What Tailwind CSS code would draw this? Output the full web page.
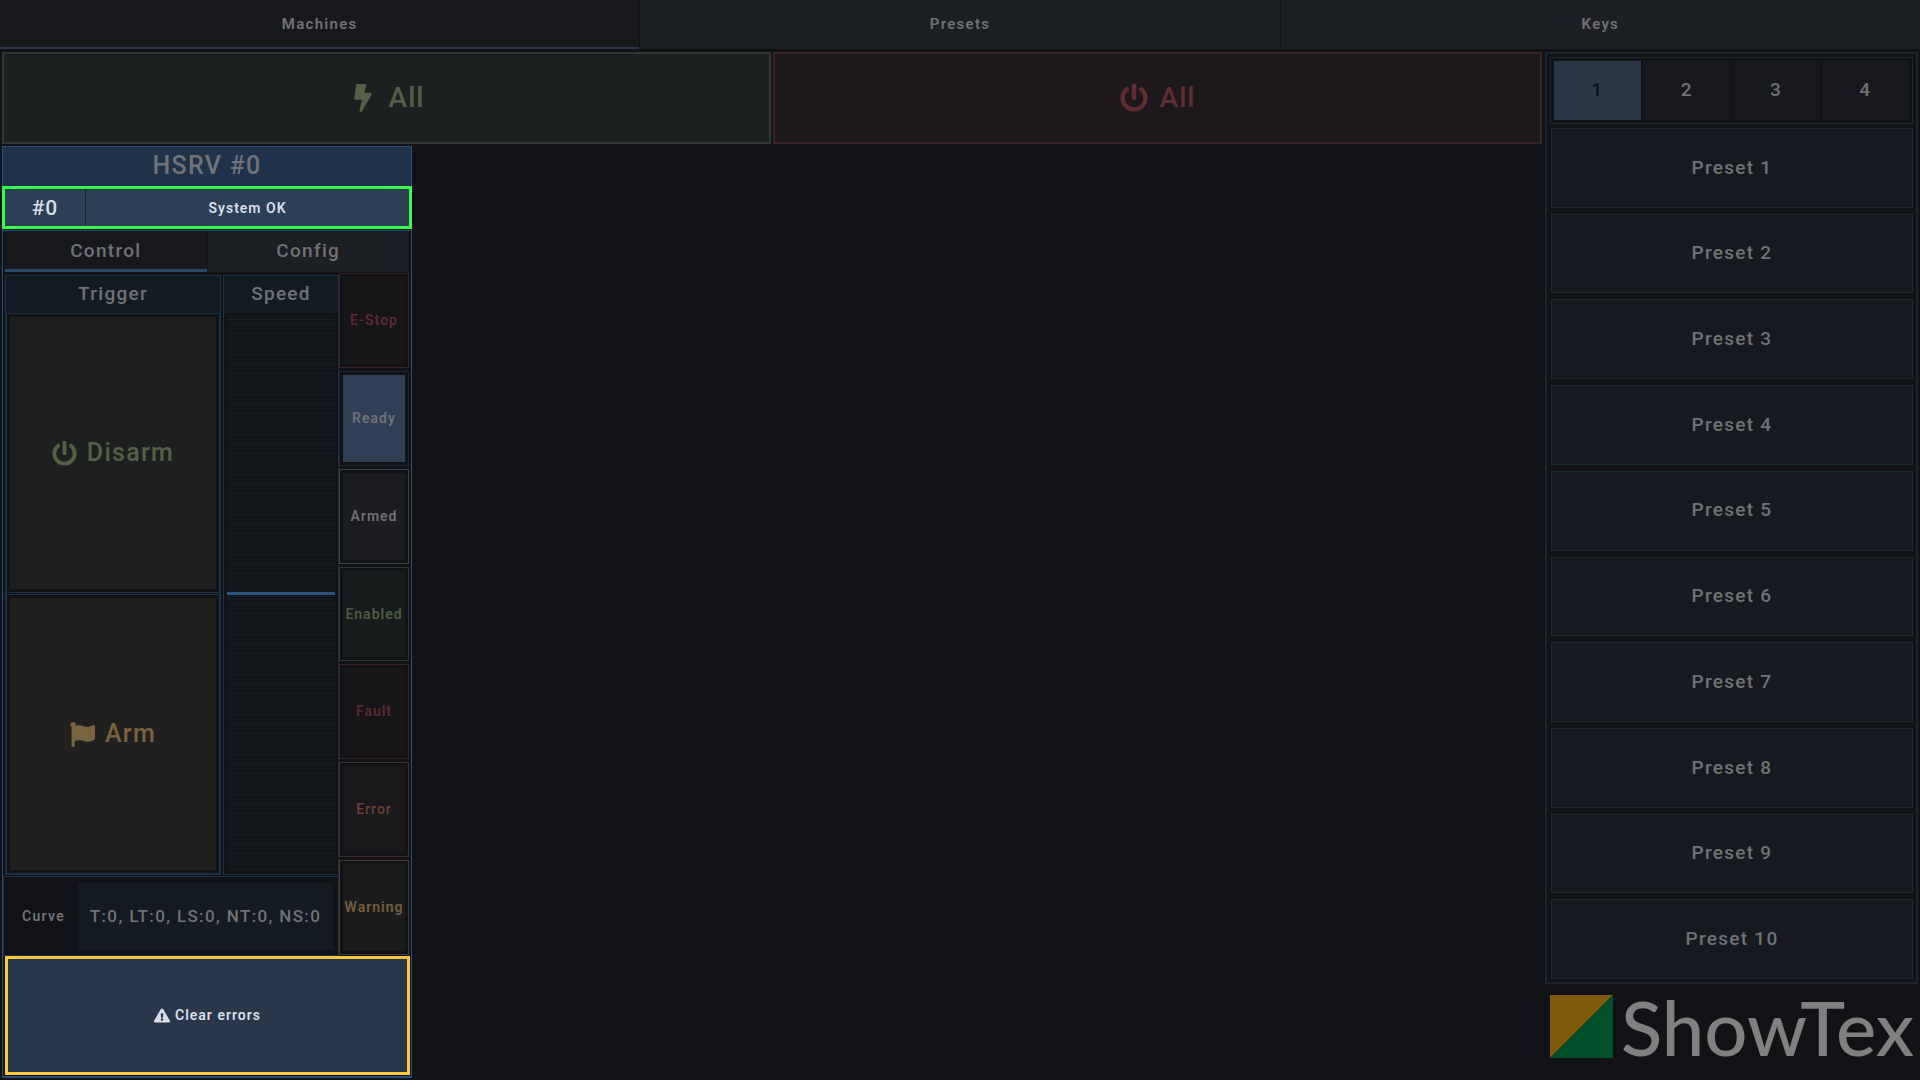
<!DOCTYPE html>
<html lang="en">
<head>
    <meta charset="UTF-8">
    <meta name="viewport" content="width=device-width, initial-scale=1.0">
    <title>ShowTex machine control</title>
    <script src="https://cdn.jsdelivr.net/npm/@tailwindcss/browser@4"></script>
</head>
<body class="bg-[#111216] text-[#707275] font-[Roboto,sans-serif] font-medium tracking-[0.08em]">
    <!-- icons -->
    <svg class="hidden">
        <symbol id="power" viewBox="0 0 512 512">
            <path fill="currentColor" d="M400 54.100c63 45 104 118.600 104 201.900 0 136.800-110.800 247.700-247.500 248C120 504.300 8.200 393 8 256.400 7.900 173.100 48.900 99.300 111.800 54.200c11.700-8.300 28-4.800 35 7.700L162.600 90c5.900 10.500 3.100 23.800-6.600 31-41.500 30.800-68 79.600-68 134.900-.1 92.300 74.500 168.100 168 168.100 91.600 0 168.600-74.200 168-169.100-.3-51.800-24.700-101.800-68.100-134-9.700-7.200-12.400-20.500-6.500-30.900l15.800-28.100c7-12.400 23.200-16.100 34.800-7.800zM296 264V24c0-13.300-10.700-24-24-24h-32c-13.300 0-24 10.700-24 24v240c0 13.300 10.700 24 24 24h32c13.300 0 24-10.700 24-24z"/>
        </symbol>
        <symbol id="bolt" viewBox="0 0 320 512">
            <path fill="currentColor" d="M296 160H180.600l42.600-129.800C227.200 15 215.700 0 200 0H56C44 0 33.800 8.900 32.200 20.800l-32 240C-1.700 275.200 9.500 288 24 288h118.700L96.600 482.500c-3.600 15.200 8 29.500 23.300 29.500 8.400 0 16.400-4.400 20.800-12l176-304c9.300-15.900-2.200-36-20.700-36z"/>
        </symbol>
        <symbol id="flag" viewBox="0 0 512 512">
            <path fill="currentColor" d="M349.565 98.783C295.978 98.783 251.721 64 184.348 64c-24.955 0-47.309 4.384-68.045 12.013a55.947 55.947 0 0 0 3.586-23.562C118.117 24.015 94.806 1.206 66.338.048 34.345-1.254 8 24.296 8 56c0 19.026 9.497 35.825 24 45.945V488c0 13.255 10.745 24 24 24h16c13.255 0 24-10.745 24-24v-94.400c28.311-12.064 63.582-22.122 114.435-22.122 53.588 0 97.844 34.783 165.217 34.783 48.169 0 86.667-16.294 122.505-40.858C506.840 359.452 512 349.571 512 339.045v-243.100c0-23.393-24.269-38.870-45.485-29.016-34.338 15.948-76.454 31.854-116.950 31.854z"/>
        </symbol>
        <symbol id="alert" viewBox="0 0 576 512">
            <path fill="currentColor" d="M569.517 440.013C587.975 472.007 564.806 512 527.940 512H48.054c-36.937 0-59.999-40.055-41.577-71.987L246.423 23.985c18.467-32.009 64.720-31.951 83.154 0l239.940 416.028zM288 354c-25.405 0-46 20.595-46 46s20.595 46 46 46 46-20.595 46-46-20.595-46-46-46zm-43.673-165.346l7.418 136c.347 6.364 5.609 11.346 11.982 11.346h48.546c6.373 0 11.635-4.982 11.982-11.346l7.418-136c.375-6.874-5.098-12.654-11.982-12.654h-63.383c-6.884 0-12.356 5.780-11.981 12.654z"/>
        </symbol>
    </svg>

    <div class="flex flex-col h-screen">
        <nav class="grid grid-cols-3 gap-px h-[49px] shrink-0 text-[15px] font-semibold">
            <button class="bg-[#17181c] border-b-2 border-[#293749] pt-[2px]">Machines</button>
            <button class="bg-[#1b1e22]">Presets</button>
            <button class="bg-[#1b1e22]">Keys</button>
        </nav>

        <div class="flex flex-1 min-h-0 gap-[3px] pt-[3px] pl-[2px] pr-[2px]">
            <main class="flex flex-col flex-1 gap-[2px] min-w-0 pb-[2px]">
                <div class="grid grid-cols-2 gap-[2px] h-[92px] shrink-0 text-[28px] tracking-[1px]">
                    <button class="flex items-center justify-center gap-3 bg-[#1c1f1f] border-2 border-[#30372e] text-[#536046]">
                        <svg class="w-[28px] h-[28px]"><use href="#bolt"/></svg>All
                    </button>
                    <button class="flex items-center justify-center gap-3 bg-[#1d181c] border-2 border-[#3b2227] text-[#602c31]">
                        <svg class="w-[28px] h-[28px]"><use href="#power"/></svg>All
                    </button>
                </div>

                <!-- machine -->
                <section class="flex flex-col flex-1 min-h-0 w-[410px] border border-b-2 border-[#28507b]">
                    <h2 class="h-[39px] shrink-0 flex items-center justify-center pb-[2px] bg-[#1e3349] text-[25px]">HSRV #0</h2>
                    <div class="flex h-[43px] shrink-0 -mx-px border-3 border-[#34ff4e] bg-[#2b4055] text-[#d8dfe8] tracking-[1px]">
                        <div class="flex items-center justify-center w-[81px] pt-[2px] border-r border-[#1b2530] text-[21px]">#0</div>
                        <div class="flex items-center justify-center flex-1 pt-[2px] text-[14px] font-semibold">System OK</div>
                    </div>
                    <div class="grid grid-cols-2 gap-px h-[42px] shrink-0 mt-px border-t border-[#28507b] pl-[2px] pr-[2px] text-[19px]">
                        <button class="bg-[#17181c] border-b-3 border-[#28486b] pt-[3px]">Control</button>
                        <button class="bg-[#1b1e22]">Config</button>
                    </div>

                    <div class="flex flex-1 min-h-0 pr-[2px] pt-px">
                        <div class="flex flex-col flex-1">
                            <div class="flex flex-1 gap-[2px] pt-[2px] pl-[2px]">
                                <div class="flex flex-col w-[216px] border border-[#1c3147]">
                                    <h3 class="h-[37px] flex items-center justify-center bg-[#131b22] text-[19px]">Trigger</h3>
                                    <div class="flex flex-col flex-1 gap-px text-[25px]">
                                        <button class="flex-1 border border-[#1c3147] p-[3px] text-[#536046]">
                                            <span class="flex items-center justify-center gap-[10px] h-full bg-[#1c1f1e]"><svg class="w-[25px] h-[25px]"><use href="#power"/></svg>Disarm</span>
                                        </button>
                                        <button class="flex-1 border border-[#1c3147] p-[3px] text-[#79633f]">
                                            <span class="flex items-center justify-center gap-[10px] h-full bg-[#201f1d]"><svg class="w-[25px] h-[25px]"><use href="#flag"/></svg>Arm</span>
                                        </button>
                                    </div>
                                </div>
                                <div class="flex flex-col flex-1 border border-[#1c3147]">
                                    <h3 class="h-[37px] flex items-center justify-center bg-[#131b22] text-[19px]">Speed</h3>
                                    <div class="flex flex-col flex-1 p-[3px]">
                                        <div class="flex flex-col flex-1 justify-center bg-[repeating-linear-gradient(180deg,#121a21_0px,#121a21_1px,#111216_1px,#111216_2px,#13191e_2px,#13191e_4px,#111216_4px,#111216_5px)]">
                                            <div class="h-[3px] bg-[#295480]"></div>
                                        </div>
                                    </div>
                                </div>
                            </div>
                            <div class="flex items-center h-[80px] mt-px border border-[#1c3147] pr-[5px]">
                                <label for="curve" class="w-[74px] shrink-0 pl-[18px] text-[14px] font-semibold">Curve</label>
                                <input id="curve" type="text" value="T:0, LT:0, LS:0, NT:0, NS:0" class="flex-1 min-w-0 h-[67px] bg-[#131a21] text-center text-[17px] tracking-[0.08em] outline-none">
                            </div>
                        </div>

                        <div class="flex flex-col w-[70px] gap-[3px] pb-px text-[14px] font-semibold text-center tracking-[1px]">
                            <div class="flex-1 border border-[#3a2025] p-[3px] text-[#5c2930]"><div class="h-full bg-[#181518] flex items-center justify-center">E-Stop</div></div>
                            <div class="flex-1 border border-[#1b2530] p-[3px]"><div class="h-full bg-[#2f3f56] flex items-center justify-center">Ready</div></div>
                            <div class="flex-1 border border-[#414246] p-[3px]"><div class="h-full bg-[#1b1c20] flex items-center justify-center">Armed</div></div>
                            <div class="flex-1 border border-[#30382e] p-[3px] text-[#4d5b42]"><div class="h-full bg-[#171b1c] flex items-center justify-center">Enabled</div></div>
                            <div class="flex-1 border border-[#3a2025] p-[3px] text-[#5c2930]"><div class="h-full bg-[#181518] flex items-center justify-center">Fault</div></div>
                            <div class="flex-1 border border-[#412d29] p-[3px] text-[#653f33]"><div class="h-full bg-[#1a171a] flex items-center justify-center">Error</div></div>
                            <div class="flex-1 border border-[#463b2b] p-[3px] text-[#725d3c]"><div class="h-full bg-[#1b1b1b] flex items-center justify-center">Warning</div></div>
                        </div>
                    </div>

                    <button class="flex items-center justify-center gap-[5px] h-[119px] shrink-0 ml-[2px] mr-px mb-px border-3 border-[#ffc640] bg-[#28374a] text-[#d8dfe8] text-[14px] font-semibold tracking-[1px]">
                        <svg class="w-[16px] h-[15px]"><use href="#alert"/></svg>Clear errors
                    </button>
                </section>
            </main>

            <aside class="flex flex-col w-[373px] shrink-0 text-[19px]">
                <div class="flex flex-col flex-1 gap-[4px] border-2 border-[#1b2430] p-[3px]">
                    <div class="grid grid-cols-4 gap-[2px] h-[67px] shrink-0 border border-[#1d2832] p-[3px]">
                        <button class="bg-[#283648] text-[#111216]">1</button>
                        <button class="bg-[#16181e]">2</button>
                        <button class="bg-[#16181e]">3</button>
                        <button class="bg-[#16181e]">4</button>
                    </div>
                    <div class="flex flex-col flex-1 gap-[6px] pl-px">
                        <button class="flex-1 bg-[#16191f] border border-[#1d2a34]">Preset 1</button>
                        <button class="flex-1 bg-[#16191f] border border-[#1d2a34]">Preset 2</button>
                        <button class="flex-1 bg-[#16191f] border border-[#1d2a34]">Preset 3</button>
                        <button class="flex-1 bg-[#16191f] border border-[#1d2a34]">Preset 4</button>
                        <button class="flex-1 bg-[#16191f] border border-[#1d2a34]">Preset 5</button>
                        <button class="flex-1 bg-[#16191f] border border-[#1d2a34]">Preset 6</button>
                        <button class="flex-1 bg-[#16191f] border border-[#1d2a34]">Preset 7</button>
                        <button class="flex-1 bg-[#16191f] border border-[#1d2a34]">Preset 8</button>
                        <button class="flex-1 bg-[#16191f] border border-[#1d2a34]">Preset 9</button>
                        <button class="flex-1 bg-[#16191f] border border-[#1d2a34]">Preset 10</button>
                    </div>
                </div>
                <div class="flex items-start gap-[8px] h-[96px] pt-[11px] pl-[5px] text-[#808080]">
                    <svg class="w-[63px] h-[63px] shrink-0" viewBox="0 0 63 63">
                        <path fill="#7f590c" d="M0 0h63L0 63z"/>
                        <path fill="#004f2b" d="M63 0v63H0z"/>
                    </svg>
                    <span class="font-[Lato,sans-serif] text-[76px] leading-[64px] tracking-normal">ShowTex</span>
                </div>
            </aside>
        </div>
    </div>
</body>
</html>
